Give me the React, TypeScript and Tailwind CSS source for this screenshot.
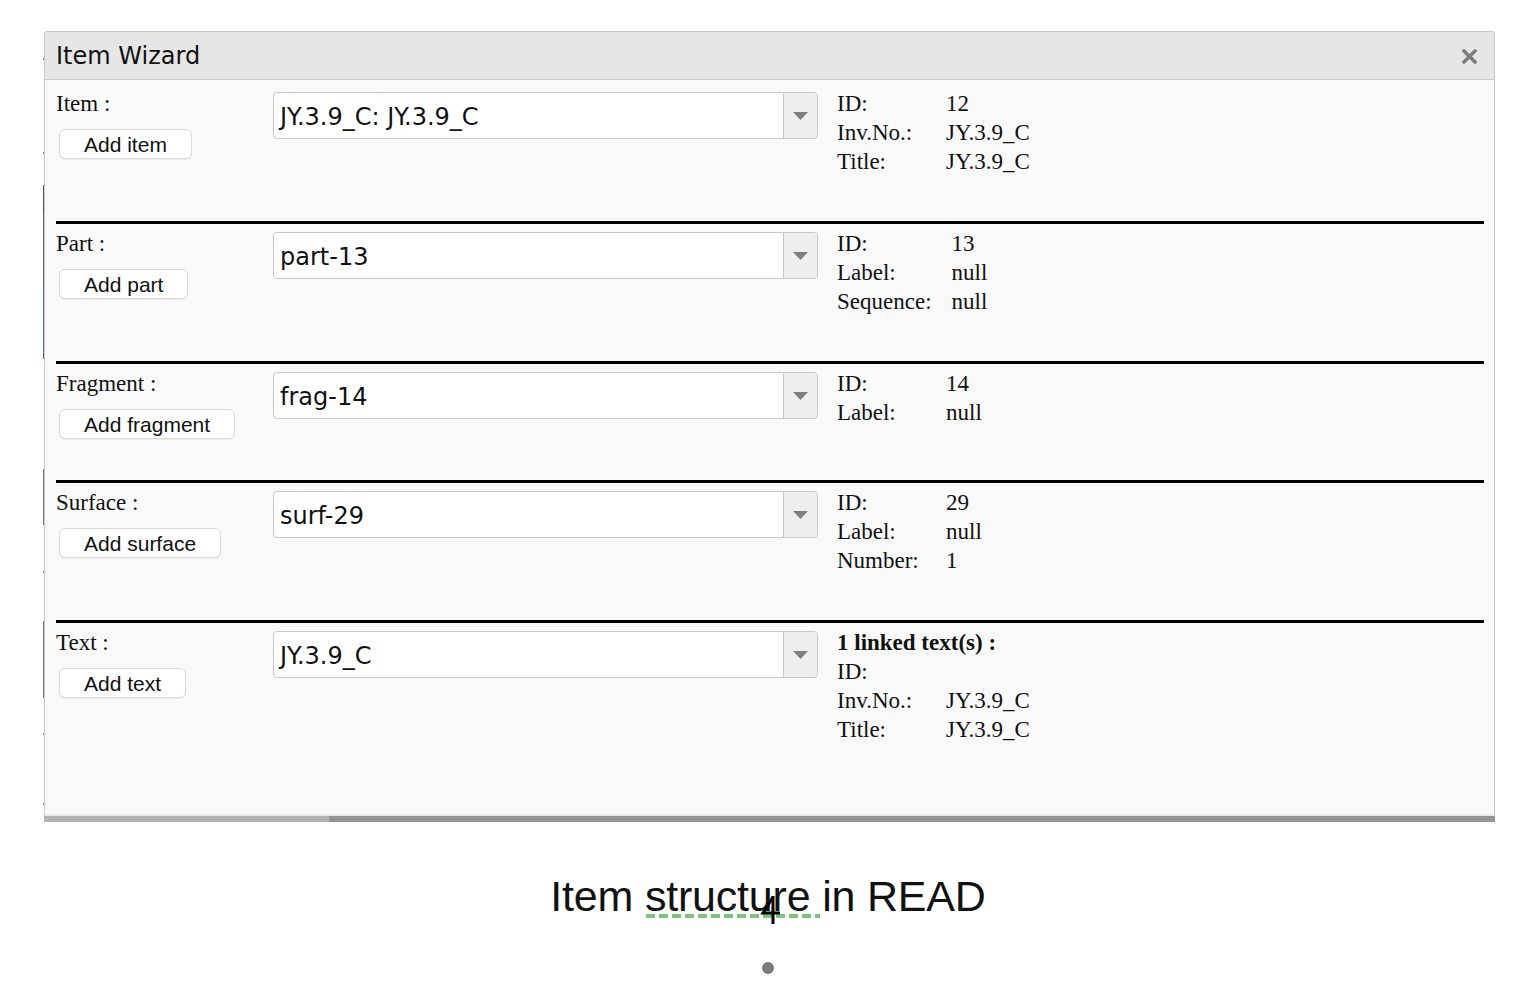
import type { ReactNode } from "react";

type Info = { label: string; value: string };

type Section = {
  name: string;
  button: string;
  selected: string;
  info: Info[];
  heading?: string;
  height: string;
};

const sections: Section[] = [
  {
    name: "Item :",
    button: "Add item",
    selected: "JY.3.9_C: JY.3.9_C",
    info: [
      { label: "ID:", value: "12" },
      { label: "Inv.No.:", value: "JY.3.9_C" },
      { label: "Title:", value: "JY.3.9_C" },
    ],
    height: "h-[141px] pt-[9px]",
  },
  {
    name: "Part :",
    button: "Add part",
    selected: "part-13",
    info: [
      { label: "ID:", value: "13" },
      { label: "Label:", value: "null" },
      { label: "Sequence:", value: "null" },
    ],
    height: "h-[140px] pt-[5px] border-t-[3px] border-black",
  },
  {
    name: "Fragment :",
    button: "Add fragment",
    selected: "frag-14",
    info: [
      { label: "ID:", value: "14" },
      { label: "Label:", value: "null" },
    ],
    height: "h-[119px] pt-[5px] border-t-[3px] border-black",
  },
  {
    name: "Surface :",
    button: "Add surface",
    selected: "surf-29",
    info: [
      { label: "ID:", value: "29" },
      { label: "Label:", value: "null" },
      { label: "Number:", value: "1" },
    ],
    height: "h-[140px] pt-[5px] border-t-[3px] border-black",
  },
  {
    name: "Text :",
    button: "Add text",
    selected: "JY.3.9_C",
    heading: "1 linked text(s) :",
    info: [
      { label: "ID:", value: "" },
      { label: "Inv.No.:", value: "JY.3.9_C" },
      { label: "Title:", value: "JY.3.9_C" },
    ],
    height: "flex-1 pt-[5px] border-t-[3px] border-black",
  },
];

const Select = ({ value }: { value: string }) => (
  <div className="mt-[3px] flex h-[47px] w-[545px] rounded-[4px] border border-[#c8c8c8] bg-white">
    <div className="flex flex-1 items-center pl-[6px] pt-[2px] font-['DejaVu_Sans',sans-serif] text-[24px] text-[#111]">
      {value}
    </div>
    <div className="flex w-[34px] items-center justify-center rounded-r-[4px] border-l border-[#c8c8c8] bg-[#eeeeee]">
      <svg width="15" height="8" viewBox="0 0 15 8">
        <path d="M0 0h15L7.5 8z" fill="#7f7f7f" />
      </svg>
    </div>
  </div>
);

const Cell = ({ label, children }: { label: string; children: ReactNode }) => (
  <>
    <div className="min-w-[109px] pr-5">{label}</div>
    <div>{children}</div>
  </>
);

const InfoTable = ({ heading, info }: { heading?: string; info: Info[] }) => (
  <div className="ml-[19px] font-['Liberation_Serif',serif] text-[23px] leading-[29px] text-[#111]">
    {heading && <div className="font-bold">{heading}</div>}
    <div className="grid grid-cols-[auto_1fr]">
      {info.map((row) => (
        <Cell key={row.label} label={row.label}>
          {row.value}
        </Cell>
      ))}
    </div>
  </div>
);

const Row = ({ s }: { s: Section }) => (
  <div className={`flex ${s.height}`}>
    <div className="w-[217px]">
      <div className="font-['Liberation_Serif',serif] text-[23px] leading-[29px] text-[#111]">{s.name}</div>
      <button className="ml-[3px] mt-[11px] h-[30px] rounded-[6px] border border-[#dadada] bg-white px-6 font-['Liberation_Sans',sans-serif] text-[21px] leading-none text-[#111] shadow-[0_1px_1px_rgba(0,0,0,0.06)]">
        {s.button}
      </button>
    </div>
    <Select value={s.selected} />
    <InfoTable heading={s.heading} info={s.info} />
  </div>
);

// bits of the page behind the dialog peeking out on its left edge
const edge = [
  { h: "h-[27px]", c: "bg-transparent" },
  { h: "h-[2px]", c: "bg-[#888]" },
  { h: "h-[92px]", c: "bg-transparent" },
  { h: "h-[2px]", c: "bg-[#888]" },
  { h: "h-[31px]", c: "bg-transparent" },
  { h: "h-[28px]", c: "bg-[#555]" },
  { h: "h-[72px]", c: "bg-[#666]" },
  { h: "h-[74px]", c: "bg-[#4a6aa8]" },
  { h: "h-[110px]", c: "bg-transparent" },
  { h: "h-[56px]", c: "bg-[#777]" },
  { h: "h-[46px]", c: "bg-transparent" },
  { h: "h-[2px]", c: "bg-[#888]" },
  { h: "h-[48px]", c: "bg-transparent" },
  { h: "h-[77px]", c: "bg-[#777]" },
  { h: "h-[35px]", c: "bg-transparent" },
  { h: "h-[2px]", c: "bg-[#888]" },
  { h: "h-[68px]", c: "bg-transparent" },
  { h: "h-[2px]", c: "bg-[#888]" },
];

export default function App() {
  return (
    <div className="min-h-screen bg-white">
      <div className="flex pl-[43px] pt-[31px]">
        <div className="flex w-px flex-col">
          {edge.map((e, i) => (
            <div key={i} className={`${e.h} ${e.c}`} />
          ))}
        </div>
        <div className="flex w-[1451px] flex-col">
          <div className="flex h-[785px] flex-col rounded-t-[3px] border border-b-0 border-[#c9c9c9] bg-[#f9f9f9]">
            <div className="flex h-[48px] items-center justify-between border-b border-[#cdcdcd] bg-[#e6e6e6] pl-[11px] pr-[17px]">
              <span className="font-['DejaVu_Sans',sans-serif] text-[24px] text-[#111]">Item Wizard</span>
              <svg width="15" height="15" viewBox="0 0 15 15" className="mt-[2px]">
                <path d="M2 2l11 11M13 2L2 13" stroke="#7c7c7c" strokeWidth="3.4" strokeLinecap="square" />
              </svg>
            </div>
            <div className="flex flex-1 flex-col border-b-2 border-[#ececec] pl-[11px] pr-[10px]">
              {sections.map((s) => (
                <Row key={s.name} s={s} />
              ))}
            </div>
          </div>
          <div className="flex h-[6px]">
            <div className="w-[285px] bg-[#b3b3b3]" />
            <div className="flex-1 bg-[#959595]" />
          </div>
        </div>
      </div>

      <div className="mt-[53px] flex justify-center">
        <div className="relative font-['Liberation_Sans',sans-serif] text-[43px] leading-[42px] tracking-[-0.2px] text-[#111]">
          Item{" "}
          <span className="relative">
            structure
            <span className="absolute left-[1px] right-[-10px] top-[42px] h-[4px] bg-[repeating-linear-gradient(90deg,#7cc57a_0_9px,transparent_9px_13px)]" />
            <svg width="24" height="32" viewBox="0 0 24 32" className="absolute left-[113px] top-[22px]">
              <path d="M15 2v28M15 3L5 19h17" stroke="#000" strokeWidth="3" fill="none" />
            </svg>
          </span>{" "}
          in READ
        </div>
      </div>

      <div className="mt-[45px] flex justify-center">
        <div className="h-[12px] w-[12px] rounded-full bg-[#7a7a7a]" />
      </div>
    </div>
  );
}
